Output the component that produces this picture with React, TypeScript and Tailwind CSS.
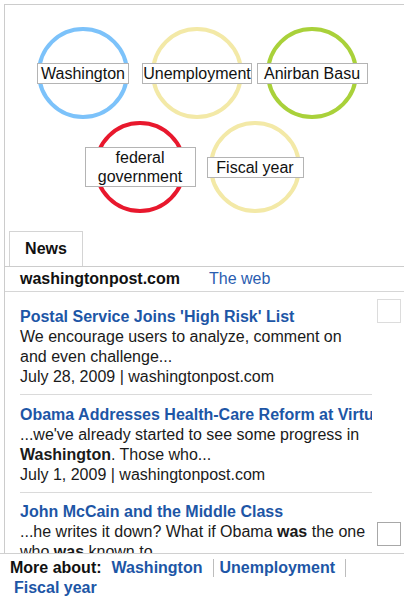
const font = "font-['Liberation_Sans',Arial,Helvetica,sans-serif]";

type Term = {
  label: string;
  ring: string;
  left: number;
  top: number;
  labelW: string;
};

// circle centres sit on a free canvas, so they're placed by coordinates
const terms: Term[] = [
  { label: "Washington", ring: "border-[#7cc2fa]", left: 32, top: 22, labelW: "w-[92px]" },
  { label: "Unemployment", ring: "border-[#f3e9a7]", left: 146, top: 22, labelW: "w-[110px]" },
  { label: "Anirban Basu", ring: "border-[#a9d13a]", left: 261, top: 22, labelW: "w-[111px]" },
  { label: "federal government", ring: "border-[#e8182d]", left: 89, top: 116, labelW: "w-[111px]" },
  { label: "Fiscal year", ring: "border-[#f3e9a7]", left: 204, top: 116, labelW: "w-[97px]" },
];

type Story = {
  title: string;
  snippet: React.ReactNode;
  date: string;
  source: string;
  boxTop: string;
  boxBorder: string;
  pt: string;
};

const stories: Story[] = [
  {
    title: "Postal Service Joins 'High Risk' List",
    snippet: <>We encourage users to analyze, comment on and even challenge...</>,
    date: "July 28, 2009",
    source: "washingtonpost.com",
    boxTop: "mt-[7px]",
    boxBorder: "border-[#dcdcdc]",
    pt: "pt-[15px]",
  },
  {
    title: "Obama Addresses Health-Care Reform at Virtual Town Hall",
    snippet: (
      <>
        ...we've already started to see some progress in <b>Washington</b>. Those who...
      </>
    ),
    date: "July 1, 2009",
    source: "washingtonpost.com",
    boxTop: "mt-[7px]",
    boxBorder: "border-transparent",
    pt: "pt-[10px]",
  },
  {
    title: "John McCain and the Middle Class",
    snippet: (
      <>
        ...he writes it down? What if Obama <b>was</b> the one who <b>was</b> known to...
      </>
    ),
    date: "June 30, 2009",
    source: "washingtonpost.com",
    boxTop: "mt-[29px]",
    boxBorder: "border-[#a8a8a8]",
    pt: "pt-[9px]",
  },
];

const moreLinks = [
  { label: "Washington", cls: "pl-[10px] pr-[10px] border-r border-[#bdbdbd]" },
  { label: "Unemployment", cls: "pl-[6px] pr-[10px] border-r border-[#bdbdbd]" },
  { label: "Fiscal year", cls: "pl-[4px]" },
];

function TermNode({ t }: { t: Term }) {
  return (
    <div
      className="absolute flex h-[92px] w-[92px] items-center justify-center"
      style={{ left: t.left, top: t.top }}
    >
      <div className={`absolute inset-0 rounded-full border-[4px] ${t.ring}`} />
      <div
        className={`relative shrink-0 ${t.labelW} border border-[#b4b4b4] bg-white text-center text-[16px] leading-[19px] text-[#111]`}
      >
        {t.label}
      </div>
    </div>
  );
}

function StoryRow({ s }: { s: Story }) {
  return (
    <div className="flex">
      <div className={`min-w-0 flex-1 border-b border-[#dadada] ${s.pt} pb-[7px]`}>
        <div className="overflow-hidden whitespace-nowrap text-[16px] font-bold leading-[20px] text-[#1d56a6]">
          {s.title}
        </div>
        <div className="text-[16px] leading-[20px] text-[#1a1a1a]">{s.snippet}</div>
        <div className="text-[16px] leading-[20px] text-[#1a1a1a]">
          {s.date} | {s.source}
        </div>
      </div>
      <div className="ml-[5px] w-[24px] shrink-0">
        <div className={`${s.boxTop} h-[24px] w-[24px] border ${s.boxBorder} bg-white`} />
      </div>
    </div>
  );
}

export default function App() {
  return (
    <div className={`h-[599px] w-[404px] overflow-hidden bg-white ${font}`}>
      {/* caption line scrolled mostly out of view */}
      <div className="flex h-[4px] items-start overflow-hidden pl-[5px]">
        <div className="-mt-[15px] whitespace-nowrap text-[16px] leading-[18px] text-[#b0b0b0]">
          Click on a term to learn more about it
        </div>
      </div>

      <div className="ml-[4px] border-l border-t border-[#cccccc]">
        {/* term map */}
        <div className="relative h-[226px]">
          {terms.map((t) => (
            <TermNode key={t.label} t={t} />
          ))}
        </div>

        {/* tabs */}
        <div className="flex border-b border-[#cccccc] pl-[4px]">
          <div className="flex h-[35px] w-[74px] items-center justify-center border-x border-t border-[#d4d4d4] bg-white text-[16px] font-bold text-[#111]">
            News
          </div>
        </div>
        <div className="flex h-[25px] items-center border-b border-[#d6d6d6] pl-[15px] text-[16px]">
          <span className="w-[189px] font-bold text-[#111]">washingtonpost.com</span>
          <span className="text-[#2a5db0]">The web</span>
        </div>

        {/* results */}
        <div className="h-[261px] overflow-hidden pl-[15px] pr-[3px]">
          {stories.map((s) => (
            <StoryRow key={s.title} s={s} />
          ))}
        </div>
      </div>

      <div className="border-t border-[#d0d0d0] pl-[10px] pt-[4px] text-[16px] leading-[20px]">
        <span className="font-bold text-[#111]">More about:</span>
        {moreLinks.map((l) => (
          <span
            key={l.label}
            className={`inline-block font-bold leading-[18px] text-[#1d56a6] ${l.cls}`}
          >
            {l.label}
          </span>
        ))}
      </div>
    </div>
  );
}
